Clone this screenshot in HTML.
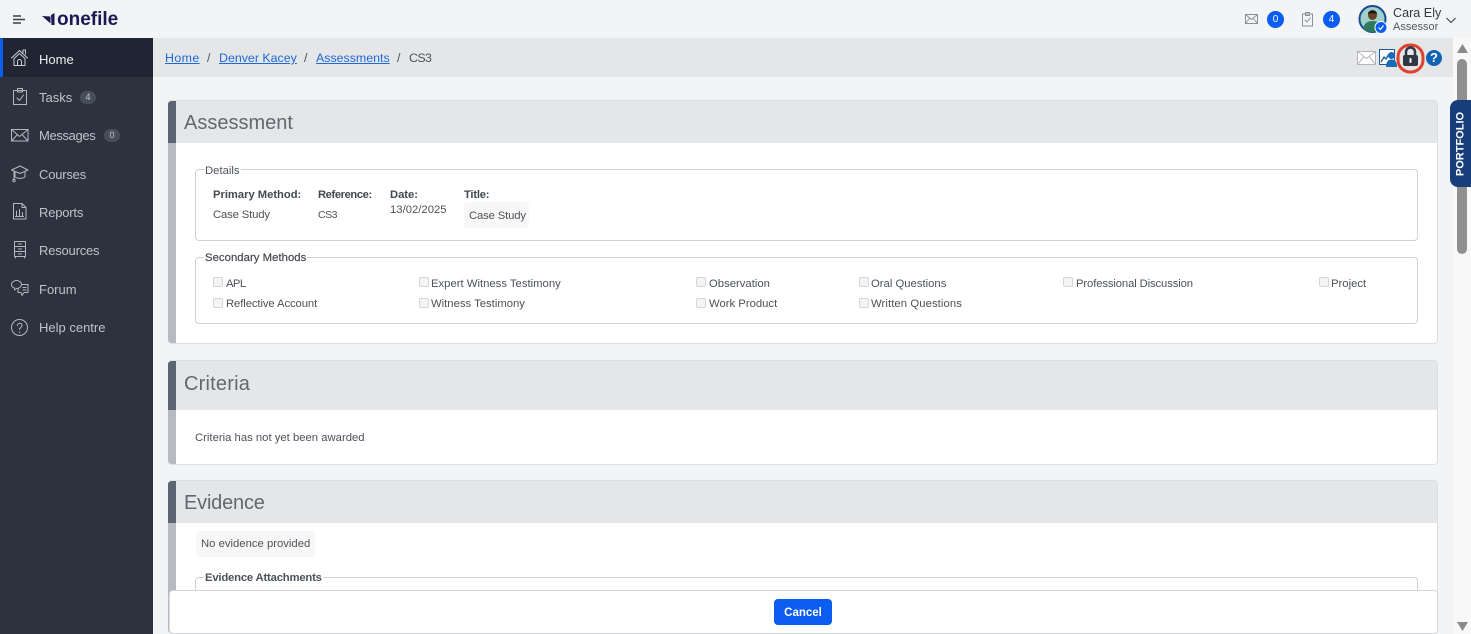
<!DOCTYPE html>
<html lang="en"><head><meta charset="utf-8"><title>Assessment</title>
<style>
*{box-sizing:border-box}
html,body{margin:0;padding:0;width:1471px;height:634px;overflow:hidden;background:#f3f4f6;font-family:"Liberation Sans",sans-serif;color:#4b5058}
.a,.t{position:absolute}
.t{white-space:nowrap;font-size:11.3px;line-height:14px;color:#4d5259}
.b{font-weight:bold;font-size:11.2px;color:#43484f}
.nav{position:absolute;left:39px;font-size:13px;line-height:18px;color:#bfc3c9;white-space:nowrap}
.pill{position:absolute;height:13px;width:16px;border-radius:7px;background:#474e5b;color:#c5c8cd;font-size:9px;line-height:13px;text-align:center}
.card{position:absolute;left:168px;width:1270px;background:#fff;border:1px solid #dcdee1;border-left:0;border-radius:4px;overflow:hidden}
.card .bar{position:absolute;left:0;top:0;bottom:0;width:8px;background:#b7bbc1}
.card .dark{position:absolute;left:0;top:0;width:8px;background:#5b6472}
.card .hd{position:absolute;left:8px;top:0;right:0;background:#e5e6e8;font-size:20px;color:#626870;padding-left:8px}
.fs{position:absolute;border:1px solid #cfd1d4;border-radius:4px;background:#fff}
.lg{position:absolute;background:#fff;padding:0 1px;font-size:11.3px;line-height:14px;color:#4d5259;white-space:nowrap}
.cb{position:absolute;width:10px;height:10px;border:1px solid #d5d6d8;border-radius:2px;background:#f4f4f4}
.bc{position:absolute;white-space:nowrap;top:50px;font-size:12.4px;line-height:16px;color:#4d5259}
.bc a{color:#1f68d6;text-decoration:underline}
svg{position:absolute;overflow:visible}
.ic{fill:none;stroke:#b4b8be;stroke-width:1;stroke-linejoin:round;stroke-linecap:round}
</style></head><body>

<!-- top bar -->
<div class="a" style="left:0;top:0;width:1471px;height:38px;background:#f3f4f6"></div>
<svg style="left:13px;top:15px" width="13" height="10"><path d="M0 1h8M0 4.500h12M0 8h8" stroke="#3b3f4a" stroke-width="1.400" fill="none"/></svg>
<svg style="left:42px;top:13px" width="13" height="12"><path d="M0 3l8.500 .5V10.500z" fill="#1c1a50"/><path d="M9 2l3.500-2v12H9.500z" fill="#1c1a50"/></svg>
<div class="t" style="left:57px;top:9px;font-size:19px;line-height:22px;font-weight:bold;color:#1c1a50">onefile</div>

<svg class="ic" style="left:1245px;top:14px" width="14" height="11"><rect x=".5" y=".5" width="12" height="9" stroke="#8d9197"/><path d="M.5 .5l6 5 6-5M.5 9.500l4-5M12.500 9.500l-4-5" stroke="#8d9197"/></svg>
<div class="a" style="left:1267px;top:11px;width:17px;height:17px;border-radius:50%;background:#0b5cf0;color:#fff;font-size:10px;line-height:17px;text-align:center">0</div>
<svg class="ic" style="left:1302px;top:12px" width="12" height="15"><rect x=".5" y="2" width="10" height="12" stroke="#8d9197"/><rect x="3.500" y=".5" width="4" height="3" stroke="#8d9197"/><path d="M3 8l2 2 3-4" stroke="#8d9197"/></svg>
<div class="a" style="left:1323px;top:11px;width:17px;height:17px;border-radius:50%;background:#0b5cf0;color:#fff;font-size:10px;line-height:17px;text-align:center">4</div>

<svg style="left:1358px;top:5px" width="29" height="29">
<circle cx="14.500" cy="14" r="13" fill="#9fd0cb" stroke="#174a94" stroke-width="2"/>
<path d="M5 24c1-6 5-8 9.500-8s8 2 9.500 8c-5 4-14 4-19 0z" fill="#2d7a5f"/>
<circle cx="14.500" cy="10.500" r="4.500" fill="#6b4226"/><path d="M10 9c0-5 9-5 9 0-3-1-6-1-9 0z" fill="#1f1712"/>
<circle cx="23" cy="22.500" r="6" fill="#0b5cf0" stroke="#fff"/><path d="M20.500 22.500l2 2 3-4" stroke="#fff" fill="none" stroke-width="1.200"/>
</svg>
<div class="t" style="left:1393px;top:5px;font-size:12.6px;line-height:16px;color:#34383f">Cara Ely</div>
<div class="t" style="left:1393px;top:20px;font-size:11px;line-height:14px;color:#55595f">Assessor</div>
<svg style="left:1446px;top:17px" width="10" height="7"><path d="M.5 1l4.500 4.500L9.500 1" stroke="#3b3f46" stroke-width="1.100" fill="none"/></svg>

<!-- sidebar -->
<div class="a" style="left:0;top:38px;width:153px;height:596px;background:#2d323e"></div>
<div class="a" style="left:0;top:38px;width:153px;height:39px;background:#1f2533"></div>
<div class="a" style="left:0;top:38px;width:3px;height:39px;background:#0b5cf0"></div>

<svg class="ic" style="left:11px;top:49px;stroke:#c9ccd1" width="18" height="18"><path d="M.5 9L8.500 1.500 16.500 9M3 9.500l5.500-5 5.500 5M3 9.500V16.500h11V9.500M6.500 16.500v-4a2 2 0 0 1 4 0v4M12 3.500V1h2.500v4"/></svg>
<div class="nav" style="top:51px;color:#eef0f2">Home</div>

<svg class="ic" style="left:13px;top:88px" width="14" height="18"><rect x=".5" y="2.500" width="13" height="14"/><rect x="4.500" y=".5" width="5" height="3.500"/><path d="M4 10l2.500 2.500L10.500 7"/></svg>
<div class="nav" style="top:89px">Tasks</div>
<div class="pill" style="left:80px;top:91px">4</div>

<svg class="ic" style="left:11px;top:129px" width="18" height="13"><rect x=".5" y=".5" width="16.500" height="11.500"/><path d="M.5 .5l8 7 8.500-7M.5 12l6-6.500M17 12l-6-6.500"/></svg>
<div class="nav" style="top:127px;letter-spacing:-.35px">Messages</div>
<div class="pill" style="left:104px;top:129px">0</div>

<svg class="ic" style="left:11px;top:165px" width="18" height="18"><path d="M.5 5L9 1l8 4-8 3.500zM4 7v5c3 2 7 2 10 0V7M3 6.500v8"/><circle cx="3" cy="15.500" r="1.200"/></svg>
<div class="nav" style="top:166px;letter-spacing:-.2px">Courses</div>

<svg class="ic" style="left:13px;top:203px" width="14" height="17"><path d="M.5 .5h8.500l4 4v11.500H.5zM9 .5v4h4M3.500 13V8M6.500 13V6.500M9.500 13V9.500M2.500 13.500h8"/></svg>
<div class="nav" style="top:204px;letter-spacing:-.2px">Reports</div>

<svg class="ic" style="left:14px;top:241px" width="12" height="17"><rect x=".5" y=".5" width="11" height="15"/><path d="M.5 5.500h11M.5 10.500h11M4.500 3h3M4.500 8h3M4.500 13h3M1.500 15.500v1.500M10.500 15.500v1.500"/></svg>
<div class="nav" style="top:242px;letter-spacing:-.2px">Resources</div>

<svg class="ic" style="left:11px;top:280px" width="18" height="17"><path d="M5.500 .5c3 0 5 2 5 4s-2 4-5 4l-2 1.500V8C1.500 7.500.5 6 .5 4.500.5 2.500 2.500.5 5.500.5zM11 4.500h6v8h-4l-2 3-1-3H7V9M12 7.500h3M12 10h3"/></svg>
<div class="nav" style="top:281px">Forum</div>

<svg class="ic" style="left:11px;top:319px" width="18" height="18"><circle cx="8.500" cy="8.500" r="8"/><path d="M6.500 6.500c0-3 4.500-3 4.500 0 0 2-2.500 2-2.500 4M8.500 13v.5"/></svg>
<div class="nav" style="top:319px">Help centre</div>

<!-- breadcrumb bar -->
<div class="a" style="left:153px;top:38px;width:1300px;height:39px;background:#e5e6e8"></div>
<div class="bc" style="left:165px;letter-spacing:.4px"><a>Home</a></div>
<div class="bc" style="left:207px">/</div>
<div class="bc" style="left:219px"><a>Denver Kacey</a></div>
<div class="bc" style="left:304px">/</div>
<div class="bc" style="left:316px"><a>Assessments</a></div>
<div class="bc" style="left:397px">/</div>
<div class="bc" style="left:409px;letter-spacing:-.6px">CS3</div>

<svg style="left:1357px;top:51px" width="19" height="14"><rect x=".5" y=".5" width="18" height="13" fill="#fff" stroke="#b3b5b8"/><path d="M.5 .5l9 7 9-7M.5 13.500l6.500-8M18.500 13.500l-6.500-8" fill="none" stroke="#b3b5b8"/></svg>
<svg style="left:1379px;top:49px" width="19" height="18"><rect x=".5" y=".5" width="15" height="15" fill="#fff" stroke="#1a5a9c"/><path d="M2 13l3-5 2 2 3-5" fill="none" stroke="#1a5a9c" stroke-width="1.300"/><path d="M7 18c0-5 2-7.500 5.500-7.500S18 13 18 18z" fill="#1a6ab8"/><circle cx="12.500" cy="6.500" r="3.500" fill="#1a6ab8"/></svg>
<svg style="left:1396px;top:43px" width="28" height="30"><rect x="2" y="2" width="25" height="27" rx="12" fill="none" stroke="#e0402e" stroke-width="3"/><path d="M10 13V9a4.500 4.500 0 0 1 9 0v4" fill="none" stroke="#303846" stroke-width="2.500"/><rect x="7" y="12" width="15" height="11" rx="2" fill="#303846"/><rect x="13.500" y="15" width="2" height="5" rx="1" fill="#fff"/></svg>
<div class="a" style="left:1426px;top:50px;width:16px;height:16px;border-radius:50%;background:#1263b3;color:#fff;font-size:13px;line-height:16px;font-weight:bold;text-align:center">?</div>

<!-- Assessment -->
<div class="card" style="top:100px;height:244px"><div class="bar"></div><div class="dark" style="height:42px"></div><div class="hd" style="height:42px;line-height:44px">Assessment</div></div>
<div class="fs" style="left:195px;top:169px;width:1223px;height:72px"></div>
<div class="lg" style="left:204px;top:164px">Details</div>
<div class="t b" style="left:213px;top:188px">Primary Method:</div>
<div class="t b" style="left:318px;top:188px;letter-spacing:-.4px">Reference:</div>
<div class="t b" style="left:390px;top:188px">Date:</div>
<div class="t b" style="left:464px;top:188px;letter-spacing:-.2px">Title:</div>
<div class="t" style="left:213px;top:208px;letter-spacing:-.15px">Case Study</div>
<div class="t" style="left:318px;top:208px;font-size:10.5px;letter-spacing:-.5px">CS3</div>
<div class="t" style="left:390px;top:203px">13/02/2025</div>
<div class="a" style="left:464px;top:202px;width:65px;height:26px;background:#f7f7f7;border-radius:3px"></div>
<div class="t" style="left:469px;top:209px;letter-spacing:-.15px">Case Study</div>

<div class="fs" style="left:195px;top:257px;width:1223px;height:67px"></div>
<div class="lg" style="left:204px;top:251px;color:#45494f;letter-spacing:.05px;-webkit-text-stroke:.2px #45494f">Secondary Methods</div>
<div class="cb" style="left:213px;top:277px"></div><div class="t" style="left:226px;top:277px;letter-spacing:-.6px">APL</div>
<div class="cb" style="left:419px;top:277px"></div><div class="t" style="left:431px;top:277px">Expert Witness Testimony</div>
<div class="cb" style="left:696px;top:277px"></div><div class="t" style="left:709px;top:277px">Observation</div>
<div class="cb" style="left:859px;top:277px"></div><div class="t" style="left:871px;top:277px">Oral Questions</div>
<div class="cb" style="left:1063px;top:277px"></div><div class="t" style="left:1076px;top:277px;letter-spacing:-.13px">Professional Discussion</div>
<div class="cb" style="left:1319px;top:277px"></div><div class="t" style="left:1331px;top:277px">Project</div>
<div class="cb" style="left:213px;top:298px"></div><div class="t" style="left:226px;top:297px;letter-spacing:-.1px">Reflective Account</div>
<div class="cb" style="left:419px;top:298px"></div><div class="t" style="left:431px;top:297px">Witness Testimony</div>
<div class="cb" style="left:696px;top:298px"></div><div class="t" style="left:709px;top:297px">Work Product</div>
<div class="cb" style="left:859px;top:298px"></div><div class="t" style="left:871px;top:297px;letter-spacing:.08px">Written Questions</div>

<!-- Criteria -->
<div class="card" style="top:360px;height:105px"><div class="bar"></div><div class="dark" style="height:49px"></div><div class="hd" style="height:49px;line-height:47px;letter-spacing:.2px">Criteria</div></div>
<div class="t" style="left:195px;top:431px">Criteria has not yet been awarded</div>

<!-- Evidence -->
<div class="card" style="top:480px;height:154px"><div class="bar"></div><div class="dark" style="height:42px"></div><div class="hd" style="height:42px;line-height:44px;letter-spacing:-.2px">Evidence</div></div>
<div class="a" style="left:196px;top:531px;width:119px;height:26px;background:#f7f7f7;border-radius:3px"></div>
<div class="t" style="left:201px;top:537px">No evidence provided</div>
<div class="fs" style="left:195px;top:577px;width:1223px;height:40px"></div>
<div class="lg b" style="left:204px;top:571px;letter-spacing:-.2px">Evidence Attachments</div>

<!-- footer -->
<div class="a" style="left:169px;top:590px;width:1269px;height:44px;background:#fff;border:1px solid #d6d8db;border-radius:4px"></div>
<div class="a" style="left:774px;top:599px;width:58px;height:26px;background:#0b5cf0;border-radius:4px;color:#fff;font-size:11.5px;font-weight:bold;line-height:28px;text-align:center">Cancel</div>

<!-- scrollbar -->
<div class="a" style="left:1453px;top:38px;width:18px;height:596px;background:#f8f8f8"></div>
<svg style="left:1457px;top:44px" width="11" height="9"><path d="M5.500 0L11 9H0z" fill="#8a8a8a"/></svg>
<div class="a" style="left:1457px;top:59px;width:10px;height:195px;background:#8f8f8f;border-radius:5px"></div>
<svg style="left:1457px;top:622px" width="11" height="9"><path d="M5.500 9L11 0H0z" fill="#8a8a8a"/></svg>

<!-- portfolio tab -->
<div class="a" style="left:1450px;top:100px;width:21px;height:87px;background:#173d7a;border-radius:8px 0 0 8px"></div>
<div class="a" style="left:1417px;top:137px;width:87px;height:14px;transform:rotate(-90deg);color:#fff;font-size:11px;line-height:14px;font-weight:bold;text-align:center">PORTFOLIO</div>
</body></html>
